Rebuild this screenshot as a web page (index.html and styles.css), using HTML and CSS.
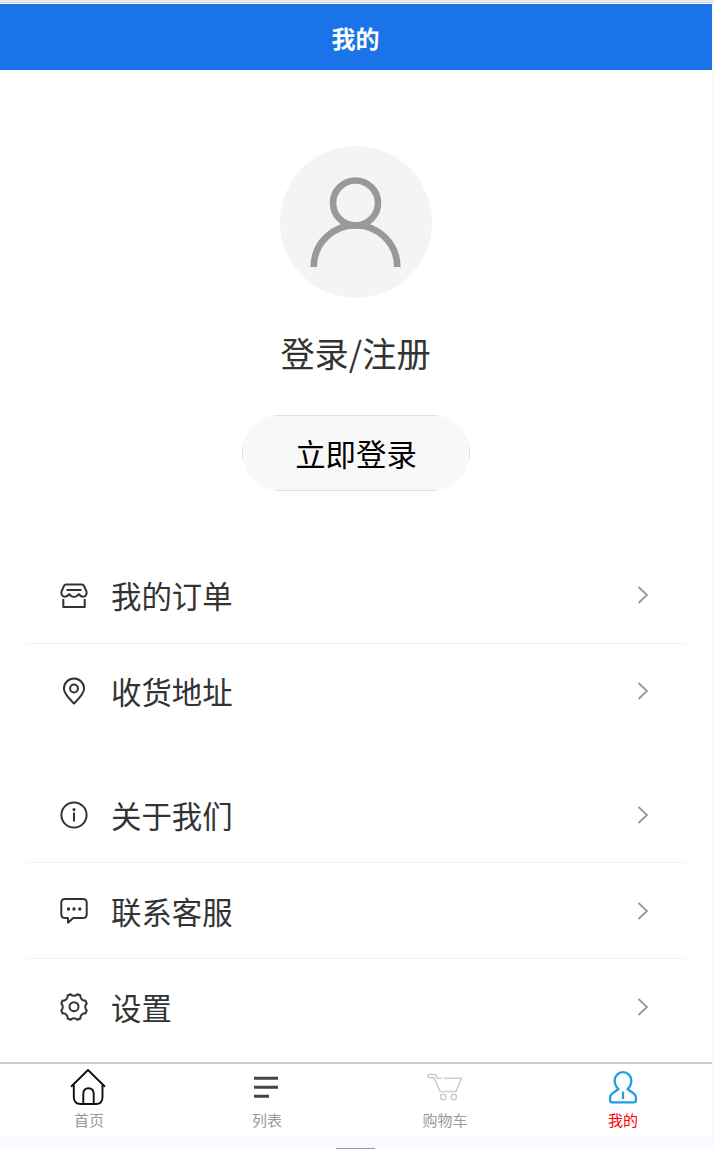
FILE: index.html
```html
<!DOCTYPE html>
<html lang="zh-CN">
<head>
<meta charset="UTF-8">
<title>我的</title>
<link rel="stylesheet" href="styles.css">
</head>
<body>
<div class="frame-top"></div>
<div class="screen">
  <header class="header">我的</header>
  <section class="profile">
    <svg class="avatar" viewBox="0 0 152 152">
      <circle cx="76" cy="76" r="76" fill="#f4f4f4"/>
      <g fill="none" stroke="#999" stroke-width="6.6">
        <circle cx="75.5" cy="57" r="22.5"/>
        <path d="M33.7 121a41.8 41.8 0 0 1 83.6 0"/>
      </g>
    </svg>
    <div class="name">登录/注册</div>
    <button class="login">立即登录</button>
  </section>
  <nav class="menu">
    <ul class="group">
      <li class="item">
        <svg class="icon" viewBox="0 0 28 28"><path d="M6 3.500h16q1.300 0 1.900 1.200l2.400 5.300c1 3-.7 5.700-3.200 5.700-1.900 0-3.300-1.100-4.300-2.600-1.200 1.600-2.800 3-4.800 3s-3.600-1.400-4.800-3c-1 1.500-2.400 2.600-4.300 2.600-2.500 0-4.200-2.700-3.200-5.700l2.400-5.300q.6-1.200 1.900-1.200zM6.500 9h15M3.300 18v8h21.400v-8"/></svg>
        <span class="label">我的订单</span>
        <svg class="arrow" viewBox="0 0 12 18"><path d="M1.500 1l8.500 8-8.500 8"/></svg>
      </li>
      <li class="item">
        <svg class="icon" viewBox="0 0 28 28"><path d="M14 26.500C9.600 22 3.900 17 3.900 11.500a10.100 10 0 0 1 20.200 0C24.100 17 18.400 22 14 26.500z"/><circle cx="14" cy="11.500" r="3.900"/></svg>
        <span class="label">收货地址</span>
        <svg class="arrow" viewBox="0 0 12 18"><path d="M1.500 1l8.500 8-8.500 8"/></svg>
      </li>
    </ul>
    <ul class="group">
      <li class="item">
        <svg class="icon" viewBox="0 0 28 28"><circle cx="14" cy="14" r="12.600"/><path d="M14 11.500v9"/><circle cx="14" cy="8.500" r="1.500" class="dot"/></svg>
        <span class="label">关于我们</span>
        <svg class="arrow" viewBox="0 0 12 18"><path d="M1.500 1l8.500 8-8.500 8"/></svg>
      </li>
      <li class="item">
        <svg class="icon" viewBox="0 0 28 28"><path d="M5 2h18q3.700 0 3.700 3.700v11.500q0 3.800-3.700 3.800h-9.800L8 25.700V21H5q-3.700 0-3.700-3.800V5.700Q1.300 2 5 2z"/><circle cx="8.500" cy="12" r="1.700" class="dot"/><circle cx="14" cy="12" r="1.700" class="dot"/><circle cx="19.800" cy="12" r="1.700" class="dot"/></svg>
        <span class="label">联系客服</span>
        <svg class="arrow" viewBox="0 0 12 18"><path d="M1.500 1l8.500 8-8.500 8"/></svg>
      </li>
      <li class="item">
        <svg class="icon" viewBox="0 0 28 28"><path d="M10.600 1.250A4.500 4.500 0 0 0 17.400 1.250L20.400 2.500A4.500 4.500 0 0 0 25.500 7.600L26.750 10.600A4.500 4.500 0 0 0 26.750 17.400L25.500 20.400A4.500 4.500 0 0 0 20.400 25.500L17.400 26.750A4.500 4.500 0 0 0 10.600 26.750L7.600 25.500A4.500 4.500 0 0 0 2.500 20.400L1.250 17.400A4.500 4.500 0 0 0 1.250 10.600L2.500 7.600A4.500 4.500 0 0 0 7.600 2.500z"/><circle cx="14" cy="13.700" r="4.500"/></svg>
        <span class="label">设置</span>
        <svg class="arrow" viewBox="0 0 12 18"><path d="M1.500 1l8.500 8-8.500 8"/></svg>
      </li>
    </ul>
  </nav>
  <footer class="tabs">
    <a class="tab">
      <svg class="tab-icon home" viewBox="0 0 36 36"><path d="M0 17.800L17 1 34 17.800M2.800 15.800v12.200q0 7 7 7H25q6.500 0 6.500-7v-12.200M12.300 35v-10q0-5.800 5.200-5.800t5.200 5.800v10"/></svg>
      <span>首页</span>
    </a>
    <a class="tab">
      <svg class="tab-icon list" viewBox="0 0 36 36"><path d="M5 9.200h24M5 18.200h24M5 27.200h15"/></svg>
      <span>列表</span>
    </a>
    <a class="tab">
      <svg class="tab-icon cart" viewBox="0 0 36 36"><path d="M9.500 9.300h5.200M17.200 9.300h17.300L29 22.500H13L7 8.800H3Q1 8.700 1 7.100T3 5.500h5.500l1.600 3.800"/><circle cx="16.200" cy="28" r="2.700"/><circle cx="26.800" cy="28" r="2.700"/></svg>
      <span>购物车</span>
    </a>
    <a class="tab active">
      <svg class="tab-icon user" viewBox="0 0 36 36"><path d="M13.500 20.300C11.200 18 9.700 15 9.700 11.500a8.300 8.300 0 0 1 16.600 0c0 3.500-1.500 6.500-3.800 8.800 3 2 5.300 3.300 7.200 5.200q1.200 1.200 1.200 3v3q0 1.900-1.900 1.900H7q-1.900 0-1.900-1.900v-3q0-1.800 1.200-3c1.900-1.900 4.200-3.200 7.200-5.200zM18 22.500v7.500"/></svg>
      <span>我的</span>
    </a>
  </footer>
</div>
<div class="frame-bottom"><div class="handle"></div></div>
</body>
</html>
```
FILE: styles.css
```css
* { box-sizing: border-box; }
body {
  margin: 0;
  height: 1149px;
  overflow: hidden;
  background: #f8faff;
  font-family: "Noto Sans CJK SC", sans-serif;
  color: #333;
}
.frame-top {
  height: 4px;
  background: linear-gradient(#e8ebee 0 2px, #d3dbe2 2px 3px, #fff 3px);
}
.screen {
  display: flex;
  flex-direction: column;
  width: 712px;
  height: 1133px;
  background: #fff;
}
.header {
  height: 66px;
  padding-right: 1px;
  background: #1a73e8;
  color: #fff;
  font-size: 24px;
  font-weight: 700;
  line-height: 68px;
  text-align: center;
}
.profile {
  display: flex;
  flex-direction: column;
  align-items: center;
  height: 477px;
  padding-top: 76px;
}
.avatar { width: 152px; height: 152px; }
.name {
  margin-top: 29px;
  padding-right: 1px;
  font-size: 34.2px;
  line-height: 50px;
}
.login {
  position: relative;
  overflow: hidden;
  width: 228px;
  height: 76px;
  margin-top: 38px;
  padding: 0 0 1px;
  border: 0;
  border-radius: 38px;
  background: #f8f8f8;
  color: #000;
  font: 30.4px/44px "Noto Sans CJK SC", sans-serif;
}
.login::after {
  content: "";
  position: absolute;
  inset: 0;
  border: 1px solid #ddd;
}
.menu {
  display: flex;
  flex-direction: column;
  gap: 28px;
  height: 515px;
}
.group {
  margin: 0;
  padding: 0 27px;
  list-style: none;
}
.item {
  display: flex;
  align-items: center;
  height: 96px;
  padding: 0 36px 0 33px;
}
.item + .item { box-shadow: inset 0 1px #f2f2f2; }
.group + .group .item + .item { box-shadow: 0 -1px #f2f2f2; }
.icon {
  width: 28px;
  height: 28px;
  fill: none;
  stroke: #333;
  stroke-width: 2;
  stroke-linejoin: round;
}
.icon .dot { fill: #333; stroke: none; }
.label {
  flex: 1;
  padding-left: 23px;
  font-size: 30.4px;
  line-height: 44px;
}
.arrow {
  width: 12px;
  height: 18px;
  fill: none;
  stroke: #999;
  stroke-width: 1.8;
}
.tabs {
  display: grid;
  grid-template-columns: repeat(4, 1fr);
  height: 75px;
  border-top: 2px solid #ccc;
}
.tab {
  display: flex;
  flex-direction: column;
  align-items: center;
  padding-top: 5px;
  color: #999;
  font-size: 15px;
  line-height: 22px;
}
.tab span { margin-top: 4px; }
.tab.active { color: #f00; }
.tab-icon {
  overflow: visible;
  width: 36px;
  height: 36px;
  fill: none;
  stroke-linejoin: round;
}
.home { stroke: #111; stroke-width: 1.9; }
.list { stroke: #444; stroke-width: 3; }
.cart { stroke: #ccc; stroke-width: 1.5; }
.user { stroke: #1e9fe0; stroke-width: 2.3; }
.frame-bottom {
  display: flex;
  justify-content: center;
  align-items: flex-end;
  width: 711px;
  height: 12px;
}
.handle {
  width: 39px;
  height: 1px;
  background: #999;
}
```
